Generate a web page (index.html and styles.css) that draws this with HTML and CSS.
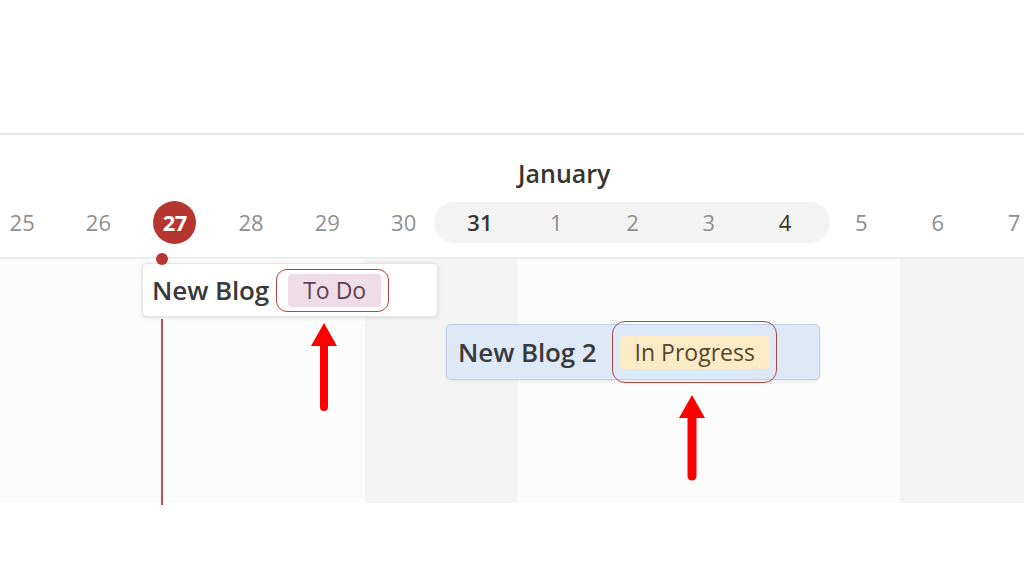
FILE: index.html
```html
<!DOCTYPE html>
<html lang="en">
<head>
    <meta charset="UTF-8">
    <meta name="viewport" content="width=device-width, initial-scale=1.0">
    <title>Timeline</title>
    <link rel="stylesheet" href="styles.css">
</head>
<body>

    <div class="top-space"></div>

    <div class="timeline">
        <!-- Header: month + days -->
        <div class="head">
            <div class="month">January</div>
            <div class="days">
                <div class="week-pill"></div>
                <div class="day">25</div>
                <div class="day">26</div>
                <div class="day"><span class="today">27</span></div>
                <div class="day">28</div>
                <div class="day">29</div>
                <div class="day">30</div>
                <div class="day strong">31</div>
                <div class="day">1</div>
                <div class="day">2</div>
                <div class="day">3</div>
                <div class="day dark">4</div>
                <div class="day">5</div>
                <div class="day">6</div>
                <div class="day">7</div>
            </div>
        </div>

        <!-- Body with day columns -->
        <div class="board">
            <div class="cols">
                <div class="col"></div>
                <div class="col"></div>
                <div class="col"></div>
                <div class="col"></div>
                <div class="col"></div>
                <div class="col weekend"></div>
                <div class="col weekend"></div>
                <div class="col"></div>
                <div class="col"></div>
                <div class="col"></div>
                <div class="col"></div>
                <div class="col"></div>
                <div class="col weekend"></div>
                <div class="col weekend"></div>
            </div>

            <div class="card card-todo">
                <span class="title">New Blog</span>
                <span class="mark mark-todo"><span class="tag tag-pink">To Do</span></span>
            </div>

            <div class="card card-progress">
                <span class="title">New Blog 2</span>
                <span class="mark mark-progress"><span class="tag tag-yellow">In Progress</span></span>
            </div>
        </div>

        <!-- Today marker -->
        <div class="today-dot"></div>
        <div class="today-line"></div>

        <!-- Annotation arrows -->
        <svg class="arrow arrow-one" width="28" height="90" viewBox="0 0 28 90">
            <polygon points="14,0 27,23 1,23" fill="#ff0000"/>
            <line x1="14" y1="20" x2="14" y2="84" stroke="#ff0000" stroke-width="8" stroke-linecap="round"/>
        </svg>
        <svg class="arrow arrow-two" width="28" height="90" viewBox="0 0 28 90">
            <polygon points="14,0 27,23 1,23" fill="#ff0000"/>
            <line x1="14" y1="20" x2="14" y2="81" stroke="#ff0000" stroke-width="9" stroke-linecap="round"/>
        </svg>
    </div>

</body>
</html>
```

FILE: styles.css
```css
body {
    margin: 0;
    background: #ffffff;
    font-family: "Open Sans", "Noto Sans", Arial, sans-serif;
    color: #37352f;
    overflow: hidden;
    height: 576px;
}
.top-space {
    height: 133px;
}
.timeline {
    position: relative;
    border-top: 2px solid #ebebeb;
}
.head {
    border-bottom: 2px solid #ebebeb;
}
.month {
    height: 64px;
    box-sizing: border-box;
    padding-top: 23px;
    padding-left: 518px;
    font-size: 25px;
    font-weight: 600;
    line-height: 30px;
    color: #37352f;
}
.days {
    display: grid;
    grid-template-columns: repeat(14, 76.3px);
    margin-left: -16px;
    height: 58px;
    box-sizing: border-box;
    padding-top: 3px;
}
.week-pill {
    grid-row: 1;
    grid-column: 7 / 12;
    margin: 0 -7px 0 -8px;
    height: 41px;
    background: #f3f3f3;
    border-radius: 21px;
}
.day {
    grid-row: 1;
    height: 41px;
    line-height: 41px;
    text-align: center;
    font-size: 22px;
    color: #8f8f8f;
    position: relative;
}
.day:nth-child(2) { grid-column: 1; }
.day:nth-child(3) { grid-column: 2; }
.day:nth-child(4) { grid-column: 3; }
.day:nth-child(5) { grid-column: 4; }
.day:nth-child(6) { grid-column: 5; }
.day:nth-child(7) { grid-column: 6; }
.day:nth-child(8) { grid-column: 7; }
.day:nth-child(9) { grid-column: 8; }
.day:nth-child(10) { grid-column: 9; }
.day:nth-child(11) { grid-column: 10; }
.day:nth-child(12) { grid-column: 11; }
.day:nth-child(13) { grid-column: 12; }
.day:nth-child(14) { grid-column: 13; }
.day:nth-child(15) { grid-column: 14; }
.day.strong {
    color: #37352f;
    font-weight: 600;
}
.day.dark {
    color: #37352f;
}
.today {
    display: inline-block;
    width: 43px;
    height: 43px;
    margin-top: -1px;
    border-radius: 50%;
    background: #b5372f;
    color: #ffffff;
    font-weight: 700;
    line-height: 43px;
    letter-spacing: -0.5px;
}
.board {
    position: relative;
    height: 244px;
}
.cols {
    display: grid;
    grid-template-columns: repeat(14, 76.3px);
    margin-left: -16px;
    height: 100%;
}
.col {
    background: #fcfcfc;
}
.col.weekend {
    background: #f4f4f4;
}
.card {
    position: absolute;
    display: flex;
    align-items: center;
    box-sizing: border-box;
    border-radius: 5px;
}
.card-todo {
    left: 142px;
    top: 4px;
    width: 296px;
    height: 54px;
    padding-left: 9px;
    background: #ffffff;
    border: 1px solid #e6e6e6;
    box-shadow: 0 1px 4px rgba(0, 0, 0, 0.12);
}
.card-progress {
    left: 446px;
    top: 65px;
    width: 374px;
    height: 56px;
    padding-left: 11px;
    background: #dde9f6;
    border: 1px solid #c2d2e3;
    box-shadow: 0 1px 3px rgba(0, 0, 0, 0.1);
}
.title {
    font-size: 26px;
    font-weight: 600;
    color: #3a3a3a;
    white-space: nowrap;
    letter-spacing: -0.1px;
}
.mark {
    display: flex;
    align-items: center;
    box-sizing: border-box;
    border: 1.5px solid #b0443f;
}
.mark-todo {
    margin-left: 7px;
    height: 43px;
    padding: 0 7px 0 11px;
    border-radius: 11px;
}
.mark-progress {
    margin-left: 15px;
    height: 62px;
    padding: 0 6px 0 7px;
    border-radius: 13px;
}
.tag {
    display: inline-block;
    height: 33px;
    line-height: 33px;
    padding: 0 15px;
    border-radius: 4px;
    font-size: 23px;
    white-space: nowrap;
}
.tag-pink {
    background: #eedde7;
    color: #5b4352;
}
.tag-yellow {
    background: #fbecc7;
    color: #554630;
}
.today-dot {
    position: absolute;
    left: 156px;
    top: 118px;
    width: 12px;
    height: 12px;
    border-radius: 50%;
    background: #b5372f;
}
.today-line {
    position: absolute;
    left: 161px;
    top: 184px;
    width: 2px;
    height: 186px;
    background: #bb514a;
}
.arrow {
    position: absolute;
}
.arrow-one {
    left: 310px;
    top: 188px;
}
.arrow-two {
    left: 678px;
    top: 260px;
}
```
